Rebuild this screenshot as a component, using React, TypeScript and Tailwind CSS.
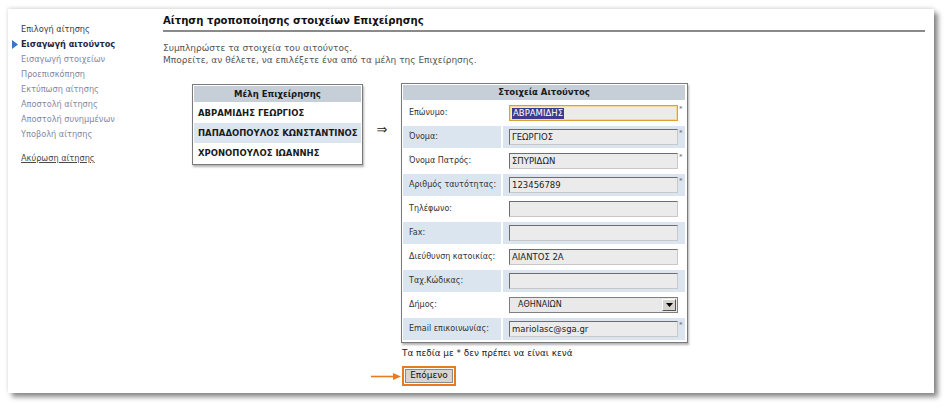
import React from "react";

const font = { fontFamily: '"DejaVu Sans", Verdana, sans-serif' };

const navItems = [
  { t: "Επιλογή αίτησης", cls: "text-[#3a3a3a]" },
  { t: "Εισαγωγή αιτούντος", cls: "text-[#1e2746] font-bold", active: true },
  { t: "Εισαγωγή στοιχείων", cls: "text-[#8487a3]" },
  { t: "Προεπισκόπηση", cls: "text-[#8487a3]" },
  { t: "Εκτύπωση αίτησης", cls: "text-[#8487a3]" },
  { t: "Αποστολή αίτησης", cls: "text-[#8487a3]" },
  { t: "Αποστολή συνημμένων", cls: "text-[#8487a3]" },
  { t: "Υποβολή αίτησης", cls: "text-[#8487a3]" },
];

type Row = { label: string; value?: string; req?: boolean; kind?: "focus" | "select" };
const rows: Row[] = [
  { label: "Επώνυμο:", value: "ΑΒΡΑΜΙΔΗΣ", req: true, kind: "focus" },
  { label: "Όνομα:", value: "ΓΕΩΡΓΙΟΣ", req: true },
  { label: "Όνομα Πατρός:", value: "ΣΠΥΡΙΔΩΝ", req: true },
  { label: "Αριθμός ταυτότητας:", value: "123456789", req: true },
  { label: "Τηλέφωνο:" },
  { label: "Fax:" },
  { label: "Διεύθυνση κατοικίας:", value: "ΑΙΑΝΤΟΣ 2Α" },
  { label: "Ταχ.Κώδικας:" },
  { label: "Δήμος:", value: "ΑΘΗΝΑΙΩΝ", kind: "select" },
  { label: "Email επικοινωνίας:", value: "mariolasc@sga.gr", req: true },
];

function Input({ r }: { r: Row }) {
  if (r.kind === "select") {
    return (
      <div className="h-[16px] w-[169px] border border-[#7f7f7f] bg-[#e9e9e9] flex items-center justify-between pl-[8px] pr-[1px] text-[8px] text-[#222]">
        <span>{r.value}</span>
        <span className="w-[14px] h-[12px] bg-[#d6d3ce] border border-t-white border-l-white border-r-[#555] border-b-[#555] flex items-center justify-center">
          <svg width="7" height="4" viewBox="0 0 7 4">
            <path d="M0 0 L7 0 L3.5 4 Z" fill="#000" />
          </svg>
        </span>
      </div>
    );
  }
  const focus = r.kind === "focus";
  return (
    <div
      className={
        "h-[16px] w-[169px] flex items-center pl-[2px] text-[8.5px] text-[#222] bg-[#ebebeb] " +
        (focus
          ? "border border-[#e0a030] shadow-[inset_0_0_0_1px_#f2d9a0]"
          : "border border-[#6e6e6e] border-b-[#c8c8c8] border-r-[#c8c8c8]")
      }
    >
      {r.value &&
        (focus ? (
          <span className="bg-[#3b3b8f] text-white px-[1px] leading-[11px]">{r.value}</span>
        ) : (
          <span>{r.value}</span>
        ))}
    </div>
  );
}

export default function App() {
  return (
    <div className="w-[948px] h-[407px] bg-white overflow-hidden pt-[9px] pl-[8px]" style={font}>
      <div className="w-[926px] h-[384px] bg-white shadow-[4px_4px_5px_rgba(0,0,0,0.45),0_-1px_4px_rgba(0,0,0,0.15)] flex">
        {/* Sidebar */}
        <div className="w-[155px] shrink-0 pl-[13px] pt-[13px] text-[8.2px]">
          {navItems.map((n) => (
            <div key={n.t} className={"relative h-[15px] leading-[15px] " + n.cls}>
              {n.active && (
                <svg className="absolute left-[-9px] top-[3px]" width="6" height="9" viewBox="0 0 6 9">
                  <path d="M0 0 L6 4.5 L0 9 Z" fill="#3f72c6" />
                </svg>
              )}
              {n.t}
            </div>
          ))}
          <div className="mt-[9px] h-[15px] leading-[15px] text-[#4a4a4a] underline">Ακύρωση αίτησης</div>
        </div>

        {/* Content */}
        <div className="flex-1 pr-[9px] pt-[5px]">
          <div className="border-b-2 border-[#8a8a8a] pb-[2px] text-[10.1px] font-bold text-[#111] leading-[14px]">
            Αίτηση τροποποίησης στοιχείων Επιχείρησης
          </div>
          <div className="mt-[10px] text-[9px] leading-[12px] text-[#555]">
            <div>Συμπληρώστε τα στοιχεία του αιτούντος.</div>
            <div>Μπορείτε, αν θέλετε, να επιλέξετε ένα από τα μέλη της Επιχείρησης.</div>
          </div>

          <div className="flex items-start mt-[17px] ml-[29px]">
            {/* Members */}
            <div className="mt-[1px] w-[171px] border border-[#7a7a7a] shadow-[1px_2px_2px_rgba(0,0,0,0.3)] p-[1px] text-[8.5px] font-bold text-[#1a1a1a]">
              <div className="h-[16px] bg-[#c6ced8] text-center leading-[16px] text-[8.5px]">Μέλη Επιχείρησης</div>
              <div className="h-[20px] leading-[20px] pl-[4px] mt-[1px]">ΑΒΡΑΜΙΔΗΣ ΓΕΩΡΓΙΟΣ</div>
              <div className="h-[20px] leading-[20px] pl-[4px] bg-[#dbe5f0]">ΠΑΠΑΔΟΠΟΥΛΟΣ ΚΩΝΣΤΑΝΤΙΝΟΣ</div>
              <div className="h-[20px] leading-[20px] pl-[4px]">ΧΡΟΝΟΠΟΥΛΟΣ ΙΩΑΝΝΗΣ</div>
            </div>

            <div className="w-[38px] text-center text-[13px] text-[#222] mt-[37px]">⇒</div>

            {/* Form */}
            <div>
              <div className="w-[287px] border border-[#7a7a7a] shadow-[1px_2px_2px_rgba(0,0,0,0.3)] p-[1px] pb-[2px] grid grid-cols-[98px_182px] gap-x-[2px] gap-y-[2px] text-[8px]">
                <div className="col-span-2 h-[15px] bg-[#c6ced8] text-center font-bold leading-[15px] text-[8.5px] text-[#1a1a1a]">
                  Στοιχεία Αιτούντος
                </div>
                {rows.map((r, i) => {
                  const bg = i % 2 === 1 ? "bg-[#dbe5f0]" : "bg-white";
                  return (
                    <React.Fragment key={r.label}>
                      <div className={"h-[22px] pl-[6px] text-[#333] flex items-center " + bg}>
                        <span className="-mt-[1px]">{r.label}</span>
                      </div>
                      <div className={"h-[22px] flex items-center pl-[6px] " + bg}>
                        <Input r={r} />
                        {r.req && <span className="ml-[1px] -mt-[8px] text-[7px] text-[#666]">*</span>}
                      </div>
                    </React.Fragment>
                  );
                })}
              </div>
              <div className="mt-[4px] ml-[1px] text-[8.9px] text-[#222] leading-[12px]">
                Τα πεδία με * δεν πρέπει να είναι κενά
              </div>
              <div className="relative mt-[7px] ml-[1px] w-[54px] h-[20px] border-2 border-[#e67b22] p-[1px]">
                <svg className="absolute left-[-33px] top-[5px]" width="30" height="7" viewBox="0 0 30 7">
                  <path d="M0 3.5 L24 3.5" stroke="#e67b22" strokeWidth="1.6" />
                  <path d="M22 0 L30 3.5 L22 7 Z" fill="#e67b22" />
                </svg>
                <div className="w-full h-full bg-[#d8d5d0] border border-[#8a8a8a] flex items-center justify-center text-[9px] text-[#111]">
                  Επόμενο
                </div>
              </div>
            </div>
          </div>
        </div>
      </div>
    </div>
  );
}
